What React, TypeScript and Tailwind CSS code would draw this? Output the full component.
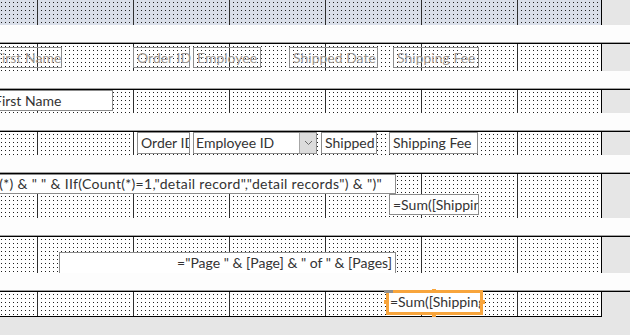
import React from "react";

const grid =
  "bg-[linear-gradient(to_right,#2e2e2e_1px,transparent_1px),conic-gradient(at_1px_1px,transparent_75%,#1f1f1f_0)] bg-[length:96px_100%,4px_4px] bg-[position:37px_0,1px_2px]";

function Bar() {
  return <div className="h-[17px] bg-[#fdfdfd]" />;
}

function Section({
  h,
  clip = true,
  children,
}: {
  h: string;
  clip?: boolean;
  children?: React.ReactNode;
}) {
  return (
    <div>
      <div className="h-px bg-[#a3a3a3]" />
      <div className="h-px bg-black" />
      <div className={`flex ${h}`}>
        <div
          className={`relative w-[602px] border-r border-black bg-white ${grid} ${
            clip ? "overflow-hidden" : ""
          }`}
        >
          {children}
        </div>
        <div className="flex-1 bg-[#e6e6e6]" />
      </div>
    </div>
  );
}

function Label({ x, w, text }: { x: string; w: string; text: string }) {
  return (
    <div
      className={`absolute top-[3px] h-[21px] ${x} ${w} border border-[#8c8c8c] pl-[3px] text-[14px] leading-[19px] whitespace-nowrap text-[#9b9590]`}
    >
      {text}
    </div>
  );
}

function Box({
  cls,
  text,
  right,
}: {
  cls: string;
  text: string;
  right?: boolean;
}) {
  return (
    <div
      className={`absolute ${cls} overflow-hidden border border-[#8c8c8c] bg-white text-[14px] leading-[19px] whitespace-nowrap text-[#333] ${
        right ? "text-right" : "pl-[3px]"
      }`}
    >
      {text}
    </div>
  );
}

export default function App() {
  return (
    <div className="h-[335px] w-[630px] overflow-hidden bg-[#e6e6e6] font-['Lato','Liberation_Sans',sans-serif]">
      <div className="flex h-[25px]">
        <div className={`w-[602px] border-r border-black bg-[#d9dee8] ${grid}`} />
        <div className="flex-1 bg-[#e6e6e6]" />
      </div>
      <Bar />
      <Section h="h-[27px]">
        <Label x="left-[-10px]" w="w-[72px]" text="First Name" />
        <Label x="left-[133px]" w="w-[57px]" text="Order ID" />
        <Label x="left-[193px]" w="w-[68px]" text="Employee" />
        <Label x="left-[289px]" w="w-[89px]" text="Shipped Date" />
        <Label x="left-[393px]" w="w-[86px]" text="Shipping Fee" />
      </Section>
      <Bar />
      <Section h="h-[23px]">
        <Box cls="left-[-10px] top-0 h-[21px] w-[123px]" text="First Name" />
      </Section>
      <Bar />
      <Section h="h-[23px]">
        <Box cls="left-[137px] top-0 h-[22px] w-[53px]" text="Order ID" />
        <div className="absolute left-[193px] top-0 flex h-[22px] w-[124px] border border-[#8c8c8c] bg-white text-[14px] leading-[19px] whitespace-nowrap text-[#333]">
          <div className="flex-1 overflow-hidden pl-[2px]">Employee ID</div>
          <div className="flex w-[17px] items-center justify-center border-l border-[#a6a6a6] bg-[#dcdcdc]">
            <svg width="9" height="6" viewBox="0 0 9 6" fill="none">
              <path d="M1 1l3.5 3.5L8 1" stroke="#6b6b6b" strokeWidth="1" />
            </svg>
          </div>
        </div>
        <Box cls="left-[321px] top-0 h-[22px] w-[56px]" text="Shipped" />
        <Box cls="left-[389px] top-0 h-[22px] w-[89px]" text="Shipping Fee" />
      </Section>
      <Bar />
      <Section h="h-[44px]">
        <div className="absolute left-[-804px] top-0 h-[20px] w-[1200px] overflow-hidden border border-[#8c8c8c] bg-white pr-[13px] text-right text-[14px] leading-[18px] tracking-[0.32px] whitespace-nowrap text-[#333]">
          {`="Summary for " & "'Employee' = " & " " & [Employee] & " (" & Count(*) & " " & IIf(Count(*)=1,"detail record","detail records") & ")"`}
        </div>
        <Box cls="left-[389px] top-[20px] h-[21px] w-[90px]" text="=Sum([Shipping Fee])" />
      </Section>
      <Bar />
      <Section h="h-[36px]">
        <div className="absolute left-[59px] top-[15px] h-[30px] w-[337px] border border-[#8c8c8c] bg-white pr-[3px] text-right text-[14px] leading-[19px] whitespace-nowrap text-[#333]">
          {`="Page " & [Page] & " of " & [Pages]`}
        </div>
      </Section>
      <Bar />
      <Section h="h-[24px]" clip={false}>
        <div className="absolute left-[386px] top-[-2px] h-[25px] w-[97px] overflow-hidden border-[3px] border-[#f8a53c] bg-white pl-[1px] text-[14px] leading-[18px] whitespace-nowrap text-[#333]">
          =Sum([Shipping Fee])
        </div>
        <div className="absolute left-[384px] top-[-2px] h-[3px] w-[9px] bg-[#8f8f8f]" />
        <div className="absolute left-[384px] top-[8px] h-[4px] w-[3px] bg-[#f8a53c]" />
        <div className="absolute left-[432px] top-[-3px] h-[2px] w-[4px] bg-[#f8a53c]" />
        <div className="absolute left-[483px] top-[8px] h-[4px] w-[2px] bg-[#f8a53c]" />
        <div className="absolute left-[432px] top-[23px] h-[2px] w-[4px] bg-[#f8a53c]" />
      </Section>
      <div className="h-px w-[602px] bg-black" />
    </div>
  );
}
